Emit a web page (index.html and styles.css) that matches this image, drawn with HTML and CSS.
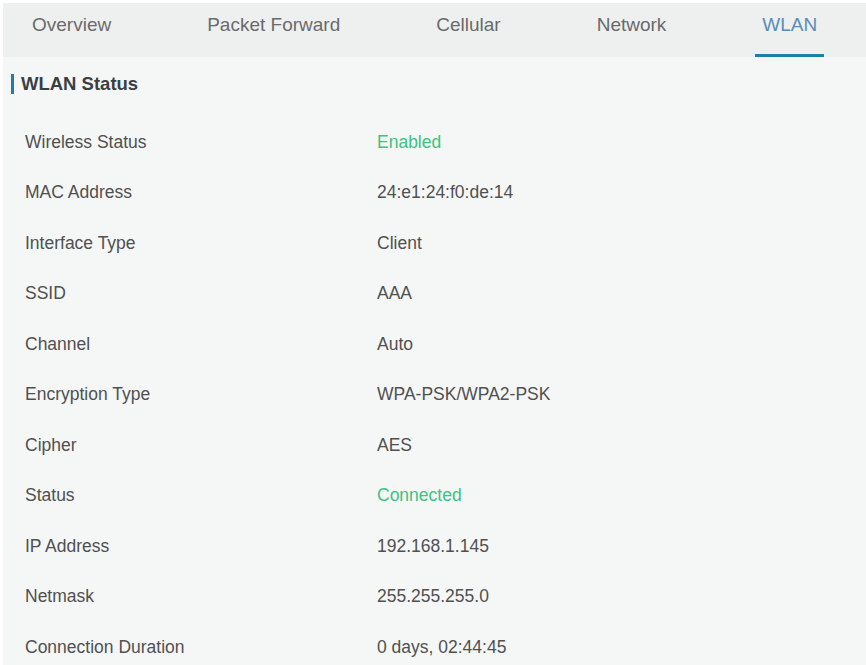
FILE: index.html
```html
<!DOCTYPE html>
<html>
<head>
<meta charset="utf-8">
<link rel="stylesheet" href="styles.css">
</head>
<body>
<div class="page">
  <nav class="tabs">
    <div class="tab">Overview</div>
    <div class="tab">Packet Forward</div>
    <div class="tab">Cellular</div>
    <div class="tab">Network</div>
    <div class="tab active">WLAN</div>
  </nav>
  <section class="content">
    <h2 class="title">WLAN Status</h2>
    <div class="rows">
      <div class="row"><span class="label">Wireless Status</span><span class="value ok">Enabled</span></div>
      <div class="row"><span class="label">MAC Address</span><span class="value">24:e1:24:f0:de:14</span></div>
      <div class="row"><span class="label">Interface Type</span><span class="value">Client</span></div>
      <div class="row"><span class="label">SSID</span><span class="value">AAA</span></div>
      <div class="row"><span class="label">Channel</span><span class="value">Auto</span></div>
      <div class="row"><span class="label">Encryption Type</span><span class="value">WPA-PSK/WPA2-PSK</span></div>
      <div class="row"><span class="label">Cipher</span><span class="value">AES</span></div>
      <div class="row"><span class="label">Status</span><span class="value ok">Connected</span></div>
      <div class="row"><span class="label">IP Address</span><span class="value">192.168.1.145</span></div>
      <div class="row"><span class="label">Netmask</span><span class="value">255.255.255.0</span></div>
      <div class="row"><span class="label">Connection Duration</span><span class="value">0 days, 02:44:45</span></div>
    </div>
  </section>
</div>
</body>
</html>
```
FILE: styles.css
```css
html, body {
  margin: 0;
  padding: 0;
  background: #ffffff;
  font-family: "Liberation Sans", Arial, sans-serif;
}
.page {
  padding: 3px 0 0 3px;
  height: 665px;
  box-sizing: border-box;
  display: flex;
  flex-direction: column;
}
.tabs {
  display: flex;
  gap: 82px;
  padding-left: 22px;
  height: 54px;
  background: #eef0f0;
}
.tab {
  box-sizing: border-box;
  height: 54px;
  padding: 11px 7px 0;
  font-size: 19px;
  line-height: 22px;
  color: #6a6a6a;
  border-bottom: 3px solid transparent;
}
.tab.active {
  color: #5a8db6;
  border-bottom-color: #1d7ea6;
}
.content {
  flex: 1;
  background: #f5f7f7;
  padding-top: 17px;
}
.title {
  margin: 0 0 0 8px;
  border-left: 3px solid #1d7ea6;
  padding-left: 7px;
  font-size: 18.5px;
  line-height: 20px;
  font-weight: bold;
  color: #3a3f44;
}
.rows {
  margin-top: 22.75px;
}
.row {
  display: grid;
  grid-template-columns: 352px 1fr;
  align-items: center;
  height: 50.5px;
  padding-left: 22px;
  font-size: 17.5px;
  color: #505050;
}
.value.ok {
  color: #3cc37f;
}
```
